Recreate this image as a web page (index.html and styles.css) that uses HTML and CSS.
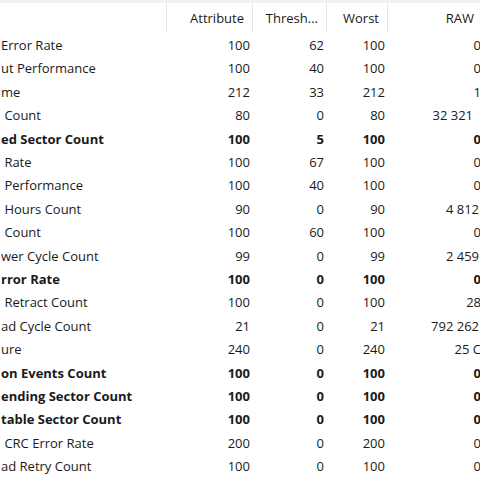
FILE: index.html
```
<!DOCTYPE html>
<html>
<head>
<meta charset="utf-8">
<link rel="stylesheet" href="styles.css">
</head>
<body>
<div class="view">
  <div class="head">
    <div class="hc name"></div>
    <div class="hc">Attribute</div>
    <div class="hc">Thresh...</div>
    <div class="hc">Worst</div>
    <div class="hc raw">RAW</div>
  </div>
  <div class="rows">
    <div class="row"><div class="c name">Error Rate</div><div class="c">100</div><div class="c">62</div><div class="c">100</div><div class="c raw">0</div></div>
    <div class="row"><div class="c name">ut Performance</div><div class="c">100</div><div class="c">40</div><div class="c">100</div><div class="c raw">0</div></div>
    <div class="row"><div class="c name">me</div><div class="c">212</div><div class="c">33</div><div class="c">212</div><div class="c raw">1</div></div>
    <div class="row"><div class="c name"> Count</div><div class="c">80</div><div class="c">0</div><div class="c">80</div><div class="c raw wide">32 321</div></div>
    <div class="row bold"><div class="c name">ed Sector Count</div><div class="c">100</div><div class="c">5</div><div class="c">100</div><div class="c raw">0</div></div>
    <div class="row"><div class="c name"> Rate</div><div class="c">100</div><div class="c">67</div><div class="c">100</div><div class="c raw">0</div></div>
    <div class="row"><div class="c name"> Performance</div><div class="c">100</div><div class="c">40</div><div class="c">100</div><div class="c raw">0</div></div>
    <div class="row"><div class="c name"> Hours Count</div><div class="c">90</div><div class="c">0</div><div class="c">90</div><div class="c raw mid">4 812</div></div>
    <div class="row"><div class="c name"> Count</div><div class="c">100</div><div class="c">60</div><div class="c">100</div><div class="c raw">0</div></div>
    <div class="row"><div class="c name">wer Cycle Count</div><div class="c">99</div><div class="c">0</div><div class="c">99</div><div class="c raw mid">2 459</div></div>
    <div class="row bold"><div class="c name">rror Rate</div><div class="c">100</div><div class="c">0</div><div class="c">100</div><div class="c raw">0</div></div>
    <div class="row"><div class="c name"> Retract Count</div><div class="c">100</div><div class="c">0</div><div class="c">100</div><div class="c raw">28</div></div>
    <div class="row"><div class="c name">ad Cycle Count</div><div class="c">21</div><div class="c">0</div><div class="c">21</div><div class="c raw mid">792 262</div></div>
    <div class="row"><div class="c name">ure</div><div class="c">240</div><div class="c">0</div><div class="c">240</div><div class="c raw">25 C</div></div>
    <div class="row bold"><div class="c name">on Events Count</div><div class="c">100</div><div class="c">0</div><div class="c">100</div><div class="c raw">0</div></div>
    <div class="row bold"><div class="c name">ending Sector Count</div><div class="c">100</div><div class="c">0</div><div class="c">100</div><div class="c raw">0</div></div>
    <div class="row bold"><div class="c name">table Sector Count</div><div class="c">100</div><div class="c">0</div><div class="c">100</div><div class="c raw">0</div></div>
    <div class="row"><div class="c name"> CRC Error Rate</div><div class="c">200</div><div class="c">0</div><div class="c">200</div><div class="c raw">0</div></div>
    <div class="row"><div class="c name">ad Retry Count</div><div class="c">100</div><div class="c">0</div><div class="c">100</div><div class="c raw">0</div></div>
  </div>
</div>
</body>
</html>
```
FILE: styles.css
```
html, body {
  margin: 0;
  padding: 0;
  background: #ffffff;
  overflow: hidden;
}
.view {
  width: 490px;
  font-family: "Open Sans", "Noto Sans", sans-serif;
  font-size: 13px;
  color: #1a1a1a;
}
.head {
  display: grid;
  grid-template-columns: 167px 86px 74px 61px 95px;
  height: 33.4px;
  border-top: 3px solid #f2f2f2;
  box-sizing: border-box;
}
.hc {
  display: flex;
  align-items: center;
  justify-content: flex-end;
  padding-right: 8px;
  border-right: 1px solid #e5e5e5;
  margin: 0 0 1px;
  box-sizing: border-box;
}
.hc.name {
  padding: 0;
}
.rows {
  display: flex;
  flex-direction: column;
}
.row {
  display: grid;
  grid-template-columns: 167px 86px 74px 61px 95px;
  height: 23.4px;
  align-items: center;
}
.row.bold {
  font-weight: 700;
}
.c {
  text-align: right;
  padding-right: 3px;
  white-space: pre;
  overflow: hidden;
}
.c.name {
  text-align: left;
  padding: 0 0 0 1px;
}
.c.raw {
  padding-right: 2px;
}
.c.raw.mid {
  padding-right: 4px;
}
.c.raw.wide {
  padding-right: 10px;
}
```
